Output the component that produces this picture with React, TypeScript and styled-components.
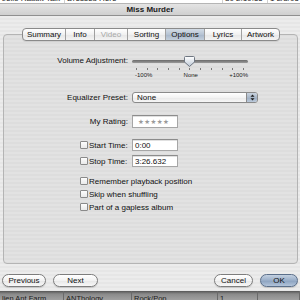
import React from "react";
import styled, { createGlobalStyle } from "styled-components";

const Global = createGlobalStyle`
  html, body { margin: 0; padding: 0; }
  body { font-family: "Liberation Sans", Arial, sans-serif; font-size: 8px; color: #111; }
`;

const Page = styled.div`
  width: 300px;
  height: 300px;
  overflow: hidden;
  display: flex;
  flex-direction: column;
  background: repeating-linear-gradient(to bottom, #ececec 0, #ececec 2px, #e6e6e6 2px, #e6e6e6 4px);
`;

const TopStrip = styled.div`
  height: 3px;
  flex: none;
  background: #fff;
  overflow: hidden;
  display: flex;
  border-bottom: 1px solid #b5b5b5;
`;

const StripCell = styled.div<{ $w: number }>`
  width: ${(p) => p.$w}px;
  flex: none;
  font-size: 8px;
  line-height: 8px;
  margin-top: -5px;
  padding-left: 2px;
  white-space: nowrap;
  overflow: hidden;
  border-right: 1px solid #d0d0d0;
  color: #222;
`;

const TitleBar = styled.div`
  height: 11px;
  flex: none;
  display: flex;
  align-items: center;
  justify-content: center;
  font-weight: bold;
  font-size: 8px;
  color: #1a1a1a;
  background: linear-gradient(#e4e4e4, #cfcfcf);
  border-bottom: 1px solid #8f8f8f;
`;

const Body = styled.div`
  flex: 1;
  display: flex;
  flex-direction: column;
  padding: 18px 2px 0 3px;
`;

const GroupBox = styled.div`
  height: 230px;
  box-sizing: border-box;
  border: 1px solid #b4b4b4;
  border-radius: 4px;
  background: rgba(0, 0, 0, 0.04);
  display: flex;
  flex-direction: column;
`;

const TabRow = styled.div`
  display: flex;
  justify-content: center;
  margin-top: -7px;
  padding-left: 1px;
`;

const Tabs = styled.div`
  display: flex;
  height: 11px;
  border: 1px solid #8a8a8a;
  border-radius: 4px;
  overflow: hidden;
  background: linear-gradient(#ffffff, #f1f1f1 50%, #e6e6e6 51%, #f4f4f4);
  box-shadow: 0 1px 0 rgba(0, 0, 0, 0.08);
`;

const Tab = styled.div<{ $w: number; $sel?: boolean; $dis?: boolean }>`
  width: ${(p) => p.$w}px;
  box-sizing: border-box;
  display: flex;
  align-items: center;
  justify-content: center;
  font-size: 8px;
  color: ${(p) => (p.$dis ? "#a8a8a8" : "#111")};
  border-left: 1px solid #a0a0a0;
  &:first-child { border-left: none; }
  ${(p) =>
    p.$sel &&
    `background: linear-gradient(#d4dce6, #b6c3d3 50%, #a7b6c9 51%, #c3cfdc);`}
`;

const Content = styled.div`
  display: flex;
  flex-direction: column;
  padding-top: 14px;
`;

const Row = styled.div<{ $mt: number }>`
  display: flex;
  align-items: flex-start;
  margin-top: ${(p) => p.$mt}px;
`;

const Label = styled.div<{ $h: number }>`
  width: 124px;
  flex: none;
  text-align: right;
  line-height: ${(p) => p.$h}px;
  white-space: nowrap;
`;

const Control = styled.div`
  margin-left: 4px;
  display: flex;
  flex-direction: column;
`;

const SliderBox = styled.div`
  width: 116px;
  display: flex;
  flex-direction: column;
`;

const TrackArea = styled.div`
  position: relative;
  height: 12px;
  display: flex;
  align-items: center;
`;

const Track = styled.div`
  height: 3px;
  width: 100%;
  border-radius: 2px;
  background: linear-gradient(#6b6b6b, #9a9a9a);
`;

const Thumb = styled.svg`
  position: absolute;
  left: 52px;
  top: 1px;
`;

const Ticks = styled.div`
  display: flex;
  justify-content: space-between;
  padding: 0 4px 0 4px;
  margin-top: 1px;
  height: 3px;
`;

const Tick = styled.div`
  width: 1px;
  height: 2px;
  background: #7a7a7a;
`;

const TickLabels = styled.div`
  display: flex;
  justify-content: space-between;
  font-size: 6px;
  line-height: 8px;
  padding: 0 0 0 3px;
  color: #222;
`;

const Popup = styled.div`
  width: 126px;
  height: 11px;
  box-sizing: border-box;
  border: 1px solid #8a8a8a;
  border-radius: 3px;
  display: flex;
  overflow: hidden;
  background: linear-gradient(#ffffff, #f3f3f3 50%, #e8e8e8 51%, #f7f7f7);
`;

const PopupText = styled.div`
  flex: 1;
  padding-left: 4px;
  line-height: 9px;
`;

const Stepper = styled.div`
  width: 10px;
  border-left: 1px solid #8a8a8a;
  background: linear-gradient(#c9d3df, #a9b7c8 50%, #9aabc0 51%, #bccadb);
  display: flex;
  align-items: center;
  justify-content: center;
`;

const Field = styled.div<{ $h: number }>`
  width: 46px;
  height: ${(p) => p.$h}px;
  box-sizing: border-box;
  background: #fff;
  border: 1px solid #a6a6a6;
  border-top-color: #8c8c8c;
  box-shadow: inset 0 1px 0 #e0e0e0;
  display: flex;
  align-items: center;
  padding-left: 2px;
`;

const Stars = styled.span`
  color: #9a9a9a;
  font-family: "DejaVu Sans", sans-serif;
  font-size: 6.5px;
  letter-spacing: 0.4px;
  padding-left: 3px;
`;

const CheckLabel = styled.div<{ $h: number }>`
  display: flex;
  align-items: center;
  height: ${(p) => p.$h}px;
  padding-left: 76px;
  width: 124px;
  box-sizing: border-box;
  flex: none;
  white-space: nowrap;
`;

const CheckRow = styled.div<{ $mt: number }>`
  display: flex;
  align-items: center;
  height: 10px;
  padding-left: 76px;
  margin-top: ${(p) => p.$mt}px;
  white-space: nowrap;
`;

const Box = styled.div`
  width: 8px;
  height: 8px;
  box-sizing: border-box;
  border: 1px solid #8a8a8a;
  border-radius: 1px;
  background: linear-gradient(#fdfdfd, #e9e9e9);
  margin-right: 1px;
  flex: none;
`;

const ButtonBar = styled.div`
  display: flex;
  align-items: center;
  margin-top: 10px;
  height: 13px;
`;

const Spacer = styled.div`
  flex: 1;
`;

const Button = styled.div<{ $w: number; $ml: number; $def?: boolean }>`
  width: ${(p) => p.$w}px;
  height: 13px;
  margin-left: ${(p) => p.$ml}px;
  box-sizing: border-box;
  border: 1px solid ${(p) => (p.$def ? "#5b6f8a" : "#7d7d7d")};
  border-radius: 7px;
  display: flex;
  align-items: center;
  justify-content: center;
  font-size: 8px;
  color: #111;
  background: ${(p) =>
    p.$def
      ? "linear-gradient(#c3d0e0, #98adc8 50%, #8aa1bf 51%, #b3c4da)"
      : "linear-gradient(#ffffff, #f2f2f2 50%, #e6e6e6 51%, #f8f8f8)"};
  box-shadow: 0 1px 1px rgba(0, 0, 0, 0.15);
`;

const BottomStrip = styled.div`
  margin-top: auto;
  height: 9px;
  flex: none;
  display: flex;
  background: linear-gradient(#555555, #8a8a8a 3px, #a0a0a0);
  overflow: hidden;
`;

const BottomCell = styled.div<{ $w: number }>`
  width: ${(p) => p.$w}px;
  flex: none;
  font-size: 7.5px;
  line-height: 9px;
  padding-left: 2px;
  padding-top: 3px;
  white-space: nowrap;
  overflow: hidden;
  color: #1c1c1c;
  box-sizing: border-box;
  border-right: 1px solid #6a6a6a;
`;

export default function App() {
  const ticks = Array.from({ length: 11 });
  return (
    <>
      <Global />
      <Page>
        <TopStrip>
          <StripCell $w={62}>Jello Rabbit Talk</StripCell>
          <StripCell $w={155}>Dressed Here</StripCell>
          <StripCell $w={42}>30 2:19:55</StripCell>
          <StripCell $w={41}>1 2/3/05 1</StripCell>
        </TopStrip>
        <TitleBar>Miss Murder</TitleBar>
        <Body>
          <GroupBox>
            <TabRow>
              <Tabs>
                <Tab $w={42}>Summary</Tab>
                <Tab $w={29}>Info</Tab>
                <Tab $w={33} $dis>Video</Tab>
                <Tab $w={38}>Sorting</Tab>
                <Tab $w={39} $sel>Options</Tab>
                <Tab $w={37}>Lyrics</Tab>
                <Tab $w={38}>Artwork</Tab>
              </Tabs>
            </TabRow>
            <Content>
              <Row $mt={0}>
                <Label $h={12}>Volume Adjustment:</Label>
                <Control>
                  <SliderBox>
                    <TrackArea>
                      <Track />
                      <Thumb width="11" height="11" viewBox="0 0 11 11">
                        <defs>
                          <linearGradient id="tg" x1="0" y1="0" x2="0" y2="1">
                            <stop offset="0" stopColor="#ffffff" />
                            <stop offset="0.5" stopColor="#dfe5ec" />
                            <stop offset="1" stopColor="#b9c5d3" />
                          </linearGradient>
                        </defs>
                        <path
                          d="M1.5 0.5 H9.5 Q10.5 0.5 10.5 1.5 V6 L5.5 10.5 L0.5 6 V1.5 Q0.5 0.5 1.5 0.5 Z"
                          fill="url(#tg)"
                          stroke="#6f7782"
                          strokeWidth="1"
                        />
                      </Thumb>
                    </TrackArea>
                    <Ticks>
                      {ticks.map((_, i) => (
                        <Tick key={i} />
                      ))}
                    </Ticks>
                    <TickLabels>
                      <span>-100%</span>
                      <span>None</span>
                      <span>+100%</span>
                    </TickLabels>
                  </SliderBox>
                </Control>
              </Row>
              <Row $mt={13}>
                <Label $h={11}>Equalizer Preset:</Label>
                <Control>
                  <Popup>
                    <PopupText>None</PopupText>
                    <Stepper>
                      <svg width="5" height="7" viewBox="0 0 5 7">
                        <path d="M2.5 0.5 L4.5 2.8 H0.5 Z M2.5 6.5 L4.5 4.2 H0.5 Z" fill="#1d1d1d" />
                      </svg>
                    </Stepper>
                  </Popup>
                </Control>
              </Row>
              <Row $mt={12}>
                <Label $h={13}>My Rating:</Label>
                <Control>
                  <Field $h={13}>
                    <Stars>★★★★★</Stars>
                  </Field>
                </Control>
              </Row>
              <Row $mt={11}>
                <CheckLabel $h={12}>
                  <Box />
                  Start Time:
                </CheckLabel>
                <Control>
                  <Field $h={12}>0:00</Field>
                </Control>
              </Row>
              <Row $mt={4}>
                <CheckLabel $h={12}>
                  <Box />
                  Stop Time:
                </CheckLabel>
                <Control>
                  <Field $h={12}>3:26.632</Field>
                </Control>
              </Row>
              <CheckRow $mt={9}>
                <Box />
                Remember playback position
              </CheckRow>
              <CheckRow $mt={3}>
                <Box />
                Skip when shuffling
              </CheckRow>
              <CheckRow $mt={3}>
                <Box />
                Part of a gapless album
              </CheckRow>
            </Content>
          </GroupBox>
          <ButtonBar>
            <Button $w={44} $ml={-1}>Previous</Button>
            <Button $w={45} $ml={7}>Next</Button>
            <Spacer />
            <Button $w={39} $ml={0}>Cancel</Button>
            <Button $w={38} $ml={7} $def>OK</Button>
          </ButtonBar>
        </Body>
        <BottomStrip>
          <BottomCell $w={64}>lien Ant Farm</BottomCell>
          <BottomCell $w={68}>ANThology</BottomCell>
          <BottomCell $w={86}>Rock/Pop</BottomCell>
          <BottomCell $w={40}>1</BottomCell>
          <BottomCell $w={42}> </BottomCell>
        </BottomStrip>
      </Page>
    </>
  );
}
